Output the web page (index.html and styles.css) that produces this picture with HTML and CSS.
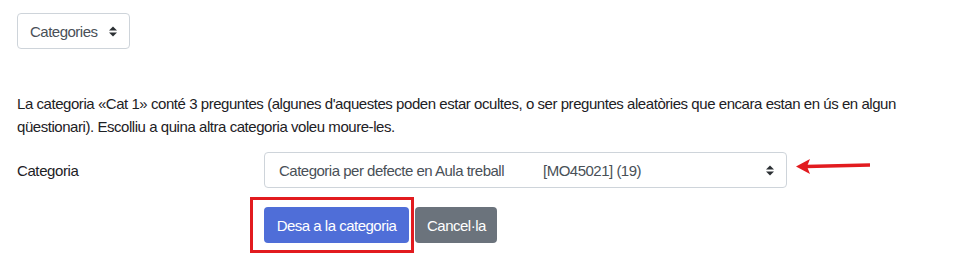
FILE: index.html
```html
<!DOCTYPE html>
<html lang="ca">
<head>
    <meta charset="UTF-8">
    <meta name="viewport" content="width=device-width, initial-scale=1.0">
    <title>Mou preguntes</title>
    <link rel="stylesheet" href="styles.css">
</head>
<body>
    <div class="page">
        <div class="select-box small">
            <span>Categories</span>
            <svg class="caret" width="8" height="11" viewBox="0 0 8 11"><path d="M0 4.5L4 0.5L8 4.5Z M0 6.5L4 10.5L8 6.5Z" fill="#2b2f33"/></svg>
        </div>

        <p class="info">La categoria «Cat 1» conté 3 preguntes (algunes d'aquestes poden estar ocultes, o ser preguntes aleatòries que encara estan en ús en algun qüestionari). Escolliu a quina altra categoria voleu moure-les.</p>

        <div class="form-row">
            <label class="form-label">Categoria</label>
            <div class="select-box wide">
                <span class="opt-name">Categoria per defecte en Aula treball</span>
                <span class="opt-code">[MO45021] (19)</span>
                <svg class="caret" width="8" height="11" viewBox="0 0 8 11"><path d="M0 4.5L4 0.5L8 4.5Z M0 6.5L4 10.5L8 6.5Z" fill="#2b2f33"/></svg>
            </div>
            <svg class="red-arrow" width="76" height="18" viewBox="0 0 76 18">
                <path d="M10 9.5L74 8" stroke="#e21b1f" stroke-width="3.5"/>
                <path d="M0 9.5L14 2L11 9.5L14 17Z" fill="#e21b1f"/>
            </svg>
        </div>

        <div class="buttons">
            <button class="btn primary">Desa a la categoria</button>
            <button class="btn secondary">Cancel·la</button>
            <div class="highlight"></div>
        </div>
    </div>
</body>
</html>
```

FILE: styles.css
```css
body {
    margin: 0;
    font-family: "Liberation Sans", Arial, sans-serif;
    color: #1d2125;
    background: #fff;
}
.page {
    padding: 13px 17px 20px 17px;
}
.select-box {
    display: flex;
    align-items: center;
    box-sizing: border-box;
    height: 36px;
    border: 1px solid #ced4da;
    border-radius: 4px;
    color: #495057;
    font-size: 15px;
    letter-spacing: -0.5px;
}
.select-box.small {
    width: 113px;
    padding: 0 12px;
    justify-content: space-between;
}
.select-box.wide {
    width: 523px;
    height: 36px;
    padding: 0 12px 0 14px;
}
.opt-name {
    width: 264px;
}
.opt-code {
    flex: 1;
}
.caret {
    flex: none;
}
.info {
    margin: 43px 0 0 0;
    font-size: 15px;
    line-height: 23px;
    letter-spacing: -0.45px;
}
.form-row {
    display: flex;
    align-items: center;
    margin-top: 14px;
}
.form-label {
    width: 247px;
    font-size: 15px;
    letter-spacing: -0.4px;
}
.red-arrow {
    margin-left: 9px;
    margin-top: -9px;
}
.buttons {
    position: relative;
    display: flex;
    gap: 6px;
    margin: 19px 0 0 247px;
}
.btn {
    height: 36px;
    border: none;
    border-radius: 4px;
    color: #fff;
    font-family: "Liberation Sans", Arial, sans-serif;
    font-size: 15px;
    letter-spacing: -0.5px;
    padding: 0 12px;
}
.primary {
    width: 145px;
    background: #4f6ed8;
}
.secondary {
    width: 82px;
    background: #6b737c;
}
.highlight {
    position: absolute;
    left: -14px;
    top: -10px;
    width: 158px;
    height: 50px;
    border: 3px solid #e21b1f;
}
```
